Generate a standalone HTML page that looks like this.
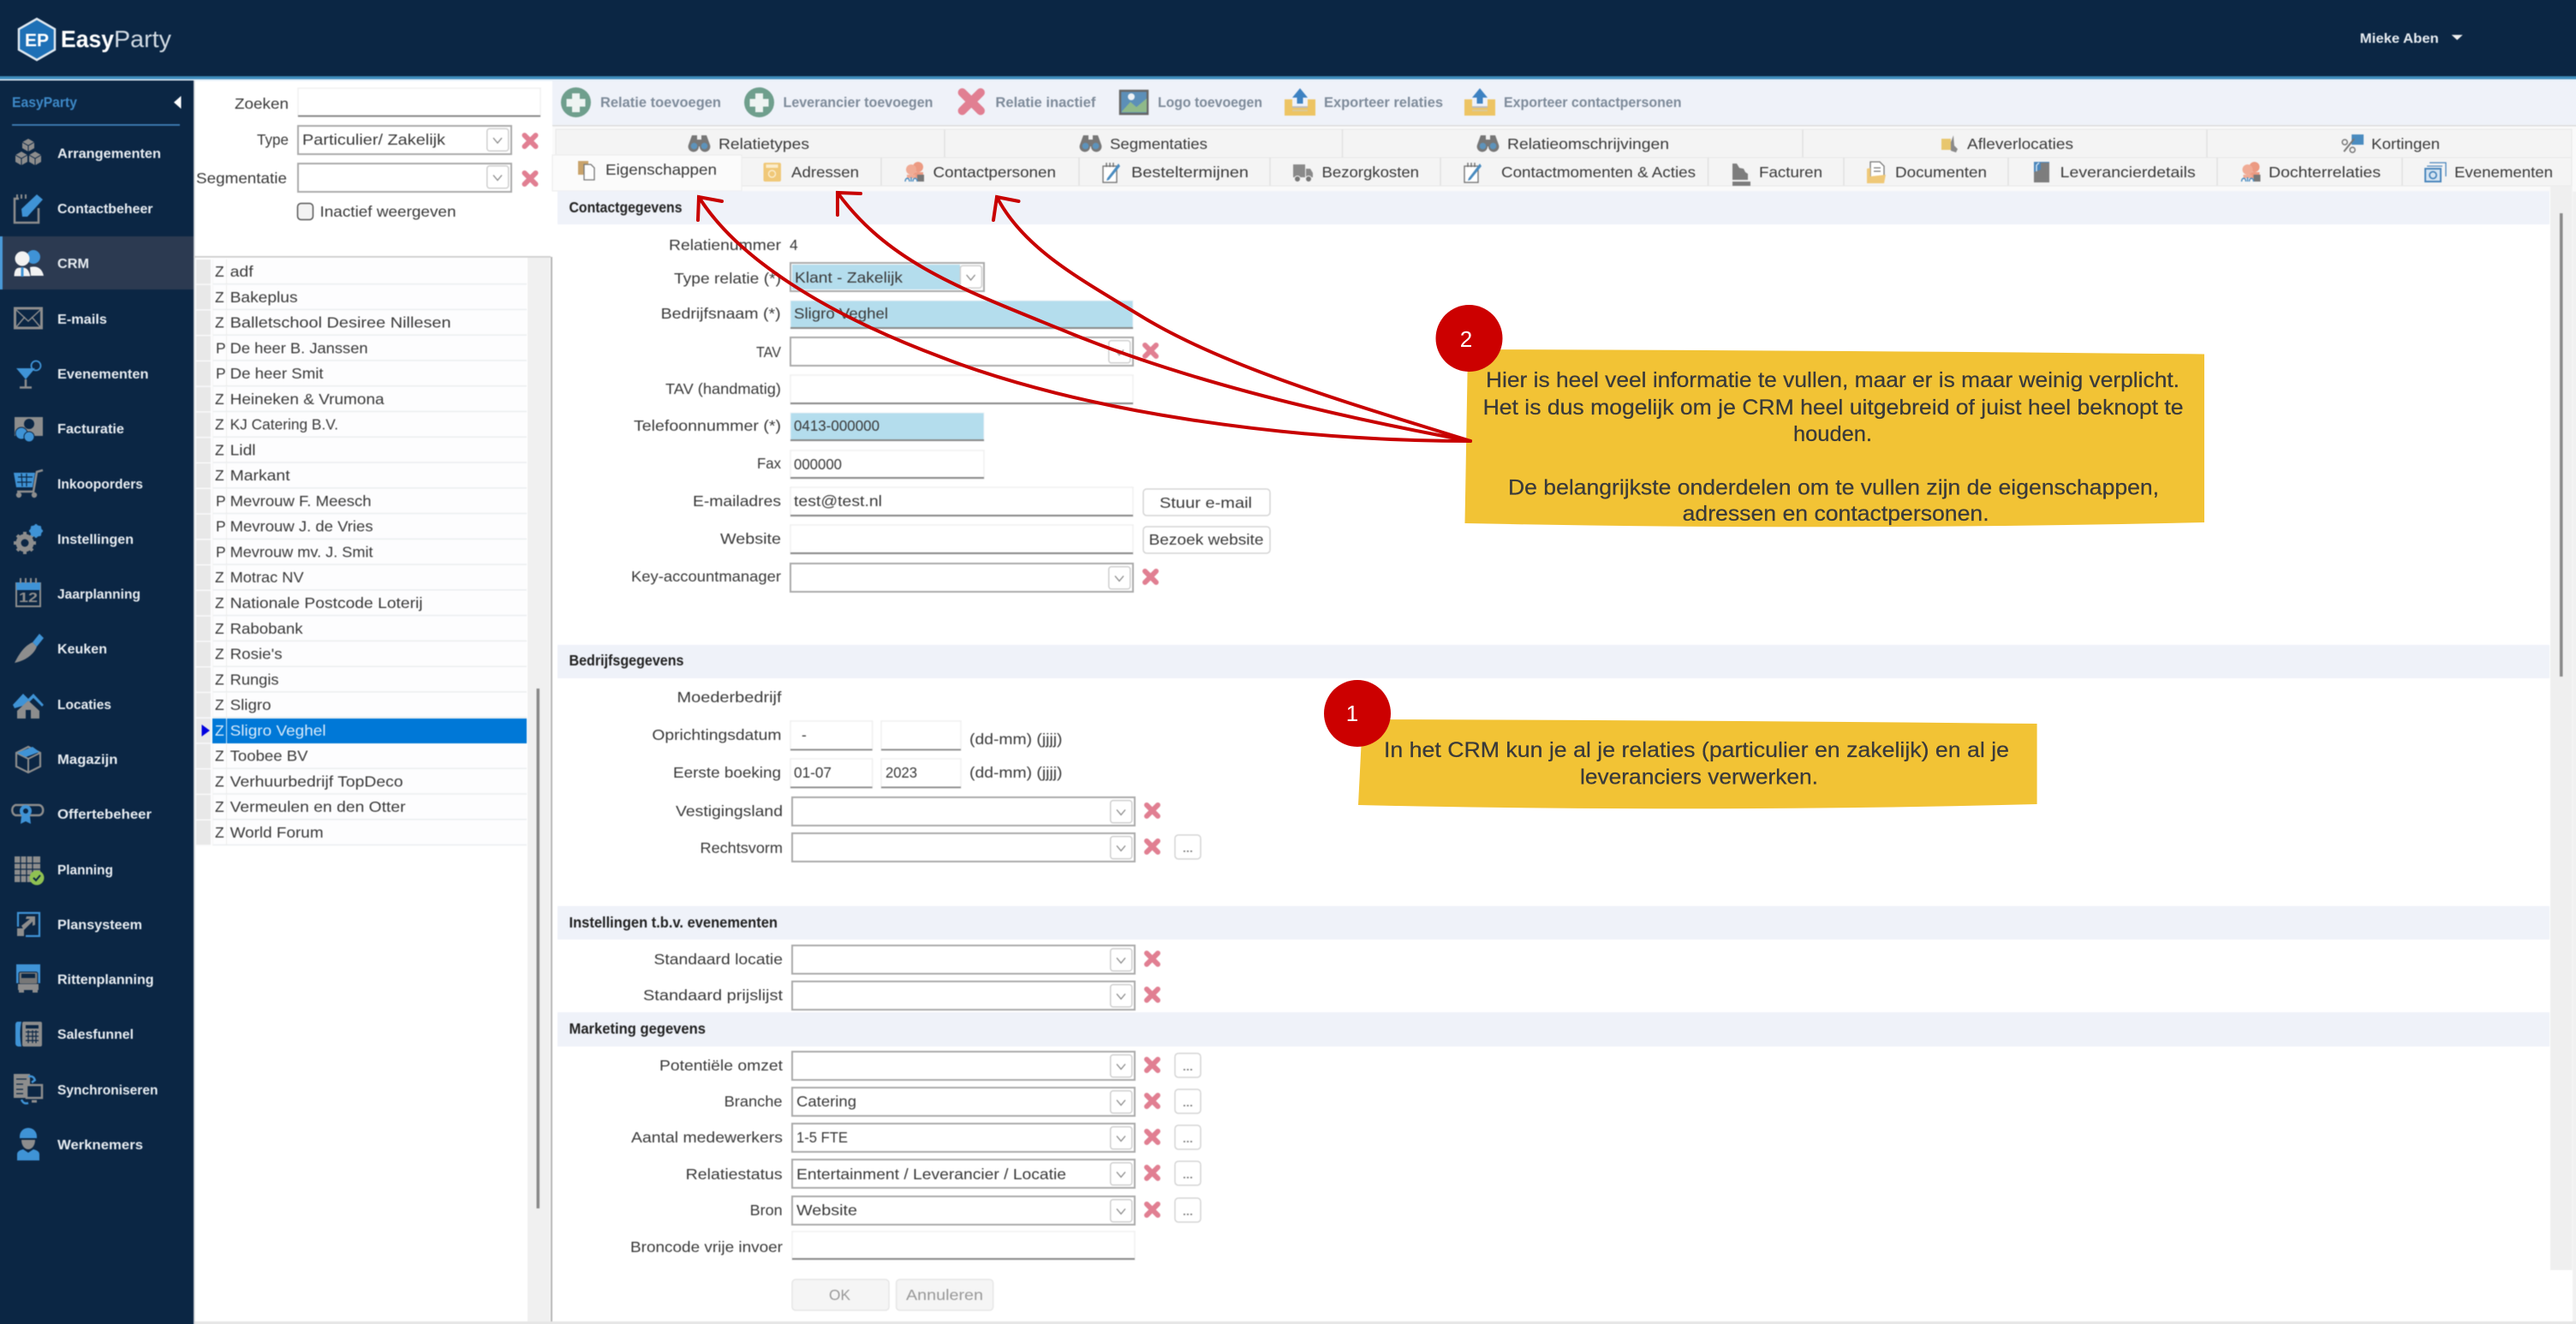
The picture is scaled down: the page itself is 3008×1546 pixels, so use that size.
<!DOCTYPE html>
<html lang="nl"><head><meta charset="utf-8"><title>EasyParty CRM</title>
<style>
html,body{margin:0;padding:0;background:#fff;width:3008px;height:1546px;overflow:hidden}
svg{display:block}
text{font-family:"Liberation Sans",sans-serif;white-space:pre}
.t{font-size:17.5px;fill:#3a3a3a}
.h{font-size:17.5px;font-weight:bold;fill:#222}
.s{font-size:16px;font-weight:bold;fill:#e6ebf0}
.b{font-size:16.5px;font-weight:bold;fill:#7f8c9b}
.n{font-size:25px;fill:#3a3a3a;stroke:#3a3a3a;stroke-width:.25px}
.ui{filter:blur(.45px)}
.sel{fill:#fff;stroke:#aaa;stroke-width:2}
.inp{fill:#fff;stroke:#f0f0f0;stroke-width:1.5}
.ul{fill:#8a8a8a}
.btn{fill:#fff;stroke:#d5d5d5;stroke-width:1.5}
.g{fill:#8d8d8d}.bl{fill:#3f93d6}
.gs{stroke:#8d8d8d;fill:none}.bs{stroke:#3f93d6;fill:none}
.arr{fill:none;stroke:#c80000;stroke-width:4;stroke-linecap:round;stroke-linejoin:miter}
</style></head><body>
<svg xmlns="http://www.w3.org/2000/svg" width="3008" height="1546" viewBox="0 0 3008 1546">
<defs>
<g id="x"><path d="M3 3L16 16M16 3L3 16" stroke="#e17f92" stroke-width="6" stroke-linecap="round" fill="none"/></g>
<g id="dd"><rect x=".75" y=".75" width="25" height="26" rx="3" fill="#fff" stroke="#cfcfcf" stroke-width="1.5"/><path d="M8 11.5l5 6 5-6" fill="none" stroke="#888" stroke-width="1.3"/></g>
<g id="s400"><rect class="sel" x="1" y="1" width="400" height="33"/><use href="#dd" x="372" y="4"/><use href="#x" x="412" y="7"/></g>
<g id="dots"><rect class="btn" x="1" y="1" width="30" height="28" rx="4"/><path d="M11 20h2M15 20h2M19 20h2" stroke="#666" stroke-width="1.4"/></g>
<g id="bino"><path d="M4 0h6v5h5V0h6l4 11a6.200 6.200 0 1 1-12 2h-1a6.200 6.200 0 1 1-12-2z" fill="#777"/><circle cx="6.500" cy="12.500" r="3.800" fill="#5d93bb"/><circle cx="18.500" cy="12.500" r="3.800" fill="#5d93bb"/></g>
<g id="plus"><circle cx="17.500" cy="17.500" r="17.500" fill="#6f9f8d"/><path d="M13 7h9v6.500h6.500v9H22v6.500h-9v-6.500H6.500v-9H13z" fill="#eef4f2"/></g>
<g id="exp"><path d="M0 13h9v8h18v-8h9v19H0z" fill="#edc463"/><rect x="9" y="21" width="18" height="2" fill="#bdbdbd"/><rect x="9" y="25" width="18" height="2" fill="#d9c99a"/><path d="M18 0l9 11h-5.500v7h-7v-7H9z" fill="#3d82c2"/></g>
<pattern id="rows" patternUnits="userSpaceOnUse" x="229" y="303" width="386" height="29.770">
<rect width="386" height="29.770" fill="#fdfdfe"/><rect width="17" height="28.500" fill="#e8e8e8"/><rect x="19" y="28" width="367" height="1.300" fill="#e9ecee"/><rect x="19" width="1" height="29" fill="#f4f4f4"/><rect x="35" width="1" height="29" fill="#ececec"/>
</pattern>
</defs>

<g class="ui">
<rect x="-30" y="-30" width="3068" height="1606" fill="#fff"/>
<rect x="3004" y="94" width="34" height="1482" fill="#f1f1f1"/>
<rect y="1543" width="2812" height="33" x="226" fill="#e6e6e6"/>

<!-- header -->
<rect x="-30" y="-30" width="3068" height="119" fill="#0b2644"/>
<rect x="-30" y="89" width="3068" height="3.500" fill="#3f8dbd"/>
<rect x="-30" y="92.500" width="3068" height="2" fill="#e4f0fa"/>
<path d="M43 22L64 34V58L43 70 22 58V34z" fill="#1e70b6" stroke="#dfe8f0" stroke-width="2.500"/>
<text x="29" y="54" font-size="21" font-weight="bold" fill="#fff" textLength="28" lengthAdjust="spacingAndGlyphs">EP</text>
<text x="71" y="55" font-size="28" font-weight="bold" fill="#fff" textLength="62" lengthAdjust="spacingAndGlyphs">Easy</text>
<text x="133" y="55" font-size="28" fill="#cfd8e1" textLength="67" lengthAdjust="spacingAndGlyphs">Party</text>
<text class="s" x="2755.700" y="50" textLength="92" lengthAdjust="spacingAndGlyphs">Mieke Aben</text>
<path d="M2862.700 40.700h13l-6.500 6z" fill="#f0f0f0"/>

<!-- sidebar -->
<rect x="-30" y="94" width="256" height="1482" fill="#0b2644"/>
<rect x="226" y="94" width="1.500" height="1482" fill="#c8ccd2"/>
<text x="14" y="125" font-size="17" font-weight="bold" fill="#3d88c6" textLength="76" lengthAdjust="spacingAndGlyphs">EasyParty</text>
<path d="M211.500 112v15l-8.500-7.500z" fill="#fff"/>
<rect x="14" y="145" width="196" height="1.800" fill="#3f80b8"/>
<rect x="-30" y="276" width="256" height="62" fill="#2c3a51"/>
<rect x="-30" y="276" width="33" height="62" fill="#4a9ad8"/>

<text class="s" x="67" y="184.500" textLength="121" lengthAdjust="spacingAndGlyphs">Arrangementen</text>
<text class="s" x="67" y="249" textLength="111.500" lengthAdjust="spacingAndGlyphs">Contactbeheer</text>
<text class="s" x="67" y="313" textLength="37" lengthAdjust="spacingAndGlyphs">CRM</text>
<text class="s" x="67" y="378" textLength="58" lengthAdjust="spacingAndGlyphs">E-mails</text>
<text class="s" x="67" y="442" textLength="106.500" lengthAdjust="spacingAndGlyphs">Evenementen</text>
<text class="s" x="67" y="506" textLength="78" lengthAdjust="spacingAndGlyphs">Facturatie</text>
<text class="s" x="67" y="570.500" textLength="100" lengthAdjust="spacingAndGlyphs">Inkooporders</text>
<text class="s" x="67" y="635" textLength="89" lengthAdjust="spacingAndGlyphs">Instellingen</text>
<text class="s" x="67" y="699" textLength="97" lengthAdjust="spacingAndGlyphs">Jaarplanning</text>
<text class="s" x="67" y="763" textLength="58" lengthAdjust="spacingAndGlyphs">Keuken</text>
<text class="s" x="67" y="828" textLength="63" lengthAdjust="spacingAndGlyphs">Locaties</text>
<text class="s" x="67" y="892" textLength="70.500" lengthAdjust="spacingAndGlyphs">Magazijn</text>
<text class="s" x="67" y="956" textLength="110" lengthAdjust="spacingAndGlyphs">Offertebeheer</text>
<text class="s" x="67" y="1021" textLength="65" lengthAdjust="spacingAndGlyphs">Planning</text>
<text class="s" x="67" y="1085" textLength="99" lengthAdjust="spacingAndGlyphs">Plansysteem</text>
<text class="s" x="67" y="1149" textLength="112.600" lengthAdjust="spacingAndGlyphs">Rittenplanning</text>
<text class="s" x="67" y="1213" textLength="89" lengthAdjust="spacingAndGlyphs">Salesfunnel</text>
<text class="s" x="67" y="1278" textLength="117.500" lengthAdjust="spacingAndGlyphs">Synchroniseren</text>
<text class="s" x="67" y="1342" textLength="100" lengthAdjust="spacingAndGlyphs">Werknemers</text>

<!-- sidebar icons -->
<g transform="translate(33,179)">
<path d="M0-17l7 4v7l-7 4-7-4v-7zM-8-2l7 4v8l-7 4-7-4v-8zM8-2l7 4v8l-7 4-7-4v-8z" class="g"/><path d="M-7-13l7 4 7-4M0-9v7M-15 2l7 4 7-4M-8 6v8M1 2l7 4 7-4M8 6v8" stroke="#0b2644" stroke-width="1" fill="none"/>
</g>
<g transform="translate(33,243)"><path d="M-11-11h-5v28h28V0" class="gs" stroke-width="2.500"/><path d="M-13-16v5M-8-16v5M-3-16v5" class="gs" stroke-width="2"/><path d="M-7 10l-1-9L10-16l7 6L-1 10z" class="bl"/></g>
<g transform="translate(33,307)"><circle cx="6" cy="-7" r="8" class="bl"/><circle cx="-7" cy="-5" r="8.500" fill="#f2f2f2"/><path d="M-17 16c0-12 6-11 10-11s8 1 10 11z" fill="#f2f2f2" stroke="#2c3a51"/><path d="M2 5c8-2 14 1 16 10H3z" fill="#f2f2f2"/><rect x="-8.500" y="5" width="3" height="11" class="bl"/></g>
<g transform="translate(33,372)"><rect x="-15.500" y="-12" width="31" height="23" class="gs" stroke-width="3"/><path d="M-15-11L0 3 15-11M-15 11L-4-2M15 11L4-2" class="gs" stroke-width="1.500"/></g>
<g transform="translate(33,437)"><path d="M-14-7H8L-3 6z" class="bl"/><path d="M-3 6v9M-10 15.500H4" class="gs" stroke-width="2.500"/><circle cx="9" cy="-10" r="5.500" class="bs" stroke-width="1.800"/></g>
<g transform="translate(33,500)"><rect x="-16" y="-13" width="33" height="22" class="g"/><circle cx="1" cy="-5" r="6" fill="#0b2644"/><circle cx="-8" cy="6" r="7" class="bl" stroke="#0b2644"/><circle cx="1" cy="10" r="6" class="bl" stroke="#0b2644"/></g>
<g transform="translate(33,565)"><path d="M-17-13H8l-3 17H-14z" class="bl"/><path d="M-12-8H5M-13-2H4M-8-12l1 15M-2-12v15" stroke="#0b2644" stroke-width="1.200" fill="none"/><path d="M17-16L10-14 6 9H-13" class="gs" stroke-width="2.500"/><circle cx="-11" cy="13" r="3.200" class="g"/><circle cx="7" cy="13" r="3.200" class="g"/></g>
<g transform="translate(33,629)"><circle cx="-4" cy="5" r="7.500" fill="none" stroke="#8d8d8d" stroke-width="6"/><path d="M-4-8v26M-17 5H9M-13-4L5 14M5-4L-13 14" stroke="#8d8d8d" stroke-width="4"/><circle cx="-4" cy="5" r="4.500" fill="#0b2644"/><circle cx="9" cy="-9" r="5" fill="none" stroke="#3f93d6" stroke-width="4"/><path d="M9-17V-1M1-9h16M3.500-14.500l11 11M14.500-14.500l-11 11" stroke="#3f93d6" stroke-width="2.500"/></g>
<g transform="translate(33,692)"><rect x="-14" y="-11" width="28" height="27" class="gs" stroke-width="2"/><rect x="-14" y="-12" width="28" height="9" class="bl"/><path d="M-9-17v6M-3-17v6M3-17v6M9-17v6" class="gs" stroke-width="2"/><text x="-11" y="11" font-size="16" font-weight="bold" fill="#8d8d8d" textLength="22" lengthAdjust="spacingAndGlyphs">12</text></g>
<g transform="translate(33,758)"><path d="M-16 16C-10 4-4-4 5-8l5 5C6 8-6 14-16 16z" class="g"/><path d="M5-8l8-10 5 5-8 10z" class="bl"/></g>
<g transform="translate(33,823)"><path d="M-18 0L-6-13 0-7 6-13 18 0l-2 2L6-8-4 2l-2-1-10 3z" class="bl"/><path d="M0-5L13 7v9H-13V7z" class="g"/><rect x="-3" y="6" width="6" height="10" fill="#0b2644"/></g>
<g transform="translate(33,887)"><path d="M0-15l14 7v16L0 15-14 8V-8z" class="gs" stroke-width="2.200"/><path d="M-14-8L0-1 14-8M0-1v16" class="gs" stroke-width="2"/><path d="M-13-8L5-15l8 6L-3-3z" class="bl"/></g>
<g transform="translate(33,950)"><path d="M-15-10H12c7 0 7 12 0 12H-15c-5-2-5-10 0-12z" class="gs" stroke-width="2.500"/><circle cx="-3" cy="-3" r="7" class="bl"/><circle cx="-3" cy="-3" r="3" fill="#0b2644"/><path d="M-8 3l-1 9 6-3 6 3-1-9z" class="bl"/></g>
<g transform="translate(33,1016)"><rect x="-16" y="-16" width="30" height="30" class="g"/><path d="M-16-8h30M-16-1h30M-16 6h30M-9-16v30M-2-16v30M5-16v30" stroke="#0b2644" stroke-width="1.200"/><circle cx="10" cy="9" r="8.500" fill="#8fc152"/><path d="M6 9l3 3 5-6" fill="none" stroke="#0b2644" stroke-width="2"/></g>
<g transform="translate(33,1079)"><path d="M-12 3V-13H13V14H-3" class="bs" stroke-width="2.200"/><rect x="-13" y="5" width="8" height="9" class="g"/><path d="M-8 2L2-6h-5l1-3H8V1L5 2V-3L-5 7z" class="g"/></g>
<g transform="translate(33,1143)"><rect x="-14" y="-17" width="28" height="22" class="bl"/><rect x="-11" y="-8" width="22" height="14" rx="2" fill="#777" stroke="#0b2644"/><rect x="-8" y="-6" width="16" height="5" fill="#0b2644"/><rect x="-12" y="6" width="24" height="7" class="g"/><rect x="-11" y="13" width="6" height="3" class="g"/><rect x="5" y="13" width="6" height="3" class="g"/></g>
<g transform="translate(33,1207)"><path d="M-12-14c-3 0-3 3-3 5v20c0 3 2 4 4 4h3c-2-10-2-20 0-29z" class="bl"/><rect x="-7" y="-14" width="23" height="29" rx="2" class="g"/><rect x="-3" y="-10" width="15" height="4" fill="#0b2644"/><path d="M-3-2h15M-3 3h15M-3 8h15M0-4v15M5-4v15M9-4v15" stroke="#0b2644" stroke-width="1.200"/></g>
<g transform="translate(33,1272)"><rect x="-17" y="-18" width="19" height="28" class="g"/><path d="M-14-12H-2M-14-6H-6M-14 0H-6M-14 5H-6" stroke="#0b2644" stroke-width="1.300"/><path d="M0-15c5-1 7 1 8 5M4-8l4-3M-8 12c2 4 4 5 8 4" class="bs" stroke-width="2.500"/><rect x="-2" y="-5" width="18" height="15" fill="#0b2644" stroke="#8d8d8d" stroke-width="2.500"/><path d="M4 14h6" class="gs" stroke-width="3"/></g>
<g transform="translate(33,1336)"><path d="M-10-9a10 10 0 0 1 20 0v2h-20z" class="bl"/><path d="M-8-5H8C8 2 4 6 0 6S-8 2-8-5z" class="g"/><path d="M-13 19V12c0-4 4-5 7-6l6 4 6-4c3 1 7 2 7 6v7z" class="bl"/></g>

<!-- list panel -->
<rect x="226" y="299" width="417" height="1.800" fill="#cdcdcd"/>
<rect x="616" y="301" width="26" height="1242" fill="#f0f0f0"/>
<rect x="626.500" y="804" width="3.500" height="607" fill="#8a8a8a"/>
<rect x="643" y="300" width="2" height="1243" fill="#b4b4b4"/>
<rect x="229" y="303" width="386" height="684.700" fill="url(#rows)"/>

<text class="t" x="274" y="127" textLength="63" lengthAdjust="spacingAndGlyphs">Zoeken</text>
<rect class="inp" x="348" y="103" width="283" height="33"/><rect class="ul" x="348" y="134.500" width="283" height="2"/>
<text class="t" x="300" y="169" textLength="37" lengthAdjust="spacingAndGlyphs">Type</text>
<rect class="sel" x="348" y="147" width="249" height="33"/><use href="#dd" x="568" y="149.500"/><use href="#x" x="609.500" y="155"/>
<text class="t" x="353" y="169" textLength="167" lengthAdjust="spacingAndGlyphs">Particulier/ Zakelijk</text>
<text class="t" x="229" y="214" textLength="106" lengthAdjust="spacingAndGlyphs">Segmentatie</text>
<rect class="sel" x="348" y="191" width="249" height="33"/><use href="#dd" x="568" y="193"/><use href="#x" x="609.500" y="199"/>
<rect x="347.500" y="237.500" width="18" height="19" rx="4" fill="#f3f3f3" stroke="#555" stroke-width="1.500"/>
<text class="t" x="373.500" y="253" textLength="159" lengthAdjust="spacingAndGlyphs">Inactief weergeven</text>

<rect x="248" y="839" width="367" height="29" fill="#0078d7"/><rect x="264" y="839" width="1" height="29" fill="#cfe6f8"/>
<path d="M235.500 846l9.500 7-9.500 7z" fill="#0000e0"/>

<g class="t">
<text x="251" y="323" textLength="9">Z</text><text x="268.600" y="323" textLength="27" lengthAdjust="spacingAndGlyphs">adf</text>
<text x="251" y="352.800" textLength="9">Z</text><text x="268.600" y="352.800" textLength="79" lengthAdjust="spacingAndGlyphs">Bakeplus</text>
<text x="251" y="382.500" textLength="9">Z</text><text x="268.600" y="382.500" textLength="258" lengthAdjust="spacingAndGlyphs">Balletschool Desiree Nillesen</text>
<text x="252" y="412.300" textLength="8">P</text><text x="268.600" y="412.300" textLength="161" lengthAdjust="spacingAndGlyphs">De heer B. Janssen</text>
<text x="252" y="442.100" textLength="8">P</text><text x="268.600" y="442.100" textLength="109" lengthAdjust="spacingAndGlyphs">De heer Smit</text>
<text x="251" y="471.900" textLength="9">Z</text><text x="268.600" y="471.900" textLength="180" lengthAdjust="spacingAndGlyphs">Heineken &amp; Vrumona</text>
<text x="251" y="501.600" textLength="9">Z</text><text x="268.600" y="501.600" textLength="126.500" lengthAdjust="spacingAndGlyphs">KJ Catering B.V.</text>
<text x="251" y="531.400" textLength="9">Z</text><text x="268.600" y="531.400" textLength="30" lengthAdjust="spacingAndGlyphs">Lidl</text>
<text x="251" y="561.200" textLength="9">Z</text><text x="268.600" y="561.200" textLength="70" lengthAdjust="spacingAndGlyphs">Markant</text>
<text x="252" y="590.900" textLength="8">P</text><text x="268.600" y="590.900" textLength="165" lengthAdjust="spacingAndGlyphs">Mevrouw F. Meesch</text>
<text x="252" y="620.700" textLength="8">P</text><text x="268.600" y="620.700" textLength="167" lengthAdjust="spacingAndGlyphs">Mevrouw J. de Vries</text>
<text x="252" y="650.500" textLength="8">P</text><text x="268.600" y="650.500" textLength="167" lengthAdjust="spacingAndGlyphs">Mevrouw mv. J. Smit</text>
<text x="251" y="680.200" textLength="9">Z</text><text x="268.600" y="680.200" textLength="86" lengthAdjust="spacingAndGlyphs">Motrac NV</text>
<text x="251" y="710" textLength="9">Z</text><text x="268.600" y="710" textLength="225" lengthAdjust="spacingAndGlyphs">Nationale Postcode Loterij</text>
<text x="251" y="739.800" textLength="9">Z</text><text x="268.600" y="739.800" textLength="85" lengthAdjust="spacingAndGlyphs">Rabobank</text>
<text x="251" y="769.600" textLength="9">Z</text><text x="268.600" y="769.600" textLength="61" lengthAdjust="spacingAndGlyphs">Rosie's</text>
<text x="251" y="799.300" textLength="9">Z</text><text x="268.600" y="799.300" textLength="57" lengthAdjust="spacingAndGlyphs">Rungis</text>
<text x="251" y="829.100" textLength="9">Z</text><text x="268.600" y="829.100" textLength="48" lengthAdjust="spacingAndGlyphs">Sligro</text>
<text x="251" y="858.900" textLength="9" style="fill:#d6e9fa">Z</text><text x="268.600" y="858.900" textLength="112" lengthAdjust="spacingAndGlyphs" style="fill:#d6e9fa">Sligro Veghel</text>
<text x="251" y="888.600" textLength="9">Z</text><text x="268.600" y="888.600" textLength="91" lengthAdjust="spacingAndGlyphs">Toobee BV</text>
<text x="251" y="918.400" textLength="9">Z</text><text x="268.600" y="918.400" textLength="202" lengthAdjust="spacingAndGlyphs">Verhuurbedrijf TopDeco</text>
<text x="251" y="948.200" textLength="9">Z</text><text x="268.600" y="948.200" textLength="205" lengthAdjust="spacingAndGlyphs">Vermeulen en den Otter</text>
<text x="251" y="977.900" textLength="9">Z</text><text x="268.600" y="977.900" textLength="109" lengthAdjust="spacingAndGlyphs">World Forum</text>
</g>

<!-- toolbar -->
<rect x="645" y="94" width="2393" height="52" fill="#eff2f9"/>
<rect x="645" y="146" width="2393" height="1.500" fill="#dcdcdc"/>
<rect x="645" y="147.500" width="2393" height="76" fill="#fafafa"/>
<use href="#plus" x="655" y="102"/><text class="b" x="701" y="125" textLength="141" lengthAdjust="spacingAndGlyphs">Relatie toevoegen</text>
<use href="#plus" x="869" y="102"/><text class="b" x="914.500" y="125" textLength="175" lengthAdjust="spacingAndGlyphs">Leverancier toevoegen</text>
<use href="#x" transform="translate(1118.600,103) scale(1.650)"/><text class="b" x="1162.400" y="125" textLength="117" lengthAdjust="spacingAndGlyphs">Relatie inactief</text>
<rect x="1308" y="106" width="32" height="27" fill="#5c8fb8" stroke="#666" stroke-width="2.500"/><path d="M1310 130l10-11 7 6 12-10v16h-29z" fill="#8fb98a"/><circle cx="1321" cy="113" r="4" fill="#eef2f6"/>
<text class="b" x="1352" y="125" textLength="122" lengthAdjust="spacingAndGlyphs">Logo toevoegen</text>
<use href="#exp" x="1500" y="103"/><text class="b" x="1546" y="125" textLength="139" lengthAdjust="spacingAndGlyphs">Exporteer relaties</text>
<use href="#exp" x="1710" y="103"/><text class="b" x="1756" y="125" textLength="207.500" lengthAdjust="spacingAndGlyphs">Exporteer contactpersonen</text>

<!-- tabs row 1 -->
<rect x="649" y="151" width="2354" height="33" fill="#f4f4f4" stroke="#e7e7e7"/>
<path d="M1103 151v33M1567.500 151v33M2105 151v33M2577 151v33" stroke="#e2e2e2" stroke-width="1.500"/>
<use href="#bino" x="804" y="158"/><text class="t" x="839" y="174" textLength="106" lengthAdjust="spacingAndGlyphs">Relatietypes</text>
<use href="#bino" x="1261" y="158"/><text class="t" x="1296" y="174" textLength="114" lengthAdjust="spacingAndGlyphs">Segmentaties</text>
<use href="#bino" x="1725" y="158"/><text class="t" x="1760" y="174" textLength="189" lengthAdjust="spacingAndGlyphs">Relatieomschrijvingen</text>
<g transform="translate(2267,158)"><rect x="0" y="4" width="11" height="13" fill="#e8c66d"/><path d="M14 0l1 12 4 4-2 4-6-2V8z" fill="#8a8a8a"/></g>
<text class="t" x="2297" y="174" textLength="124" lengthAdjust="spacingAndGlyphs">Afleverlocaties</text>
<g transform="translate(2735,157)"><rect x="11" y="0" width="14" height="12" fill="#4a8cc0"/><path d="M2 20L14 5" stroke="#777" stroke-width="2"/><circle cx="3" cy="9" r="3" fill="none" stroke="#777" stroke-width="1.500"/><circle cx="12" cy="18" r="3" fill="none" stroke="#777" stroke-width="1.500"/></g>
<text class="t" x="2769" y="174" textLength="80" lengthAdjust="spacingAndGlyphs">Kortingen</text>

<!-- tabs row 2 -->
<rect x="866" y="184" width="2137" height="33" fill="#f4f4f4" stroke="#e7e7e7"/>
<path d="M1029 184v33M1260 184v33M1483 184v33M1682 184v33M1994.600 184v33M2153 184v33M2345 184v33M2589 184v33M2805 184v33" stroke="#e2e2e2" stroke-width="1.500"/>
<rect x="645" y="181" width="221" height="42" fill="#fbfbfb" stroke="#ececec"/>
<g transform="translate(675,186)"><rect x="0" y="2" width="12" height="16" fill="#c9a36b"/><path d="M7 6h8l4 4v14H7z" fill="#fdfdfd" stroke="#777" stroke-width="1.300"/></g>
<text class="t" x="707" y="204" textLength="130" lengthAdjust="spacingAndGlyphs">Eigenschappen</text>
<g transform="translate(891.500,190)"><rect width="20.500" height="22" rx="2" fill="#f0c878"/><rect x="3" y="2" width="14" height="4" fill="#fbeccb"/><circle cx="10" cy="13" r="4" fill="none" stroke="#fbeccb" stroke-width="1.500"/></g>
<text class="t" x="924" y="207" textLength="79" lengthAdjust="spacingAndGlyphs">Adressen</text>
<g transform="translate(1056,189)"><circle cx="16" cy="6" r="6" fill="#ec9a82"/><path d="M10 12h12v7H10z" fill="#ec9a82"/><circle cx="8" cy="9" r="6" fill="#f0ab95"/><path d="M3 15h10v4H3z" fill="#f0ab95"/><rect x="15" y="15" width="8" height="8" fill="#777"/><path d="M1 23c0-5 5-5 5 0M8 18v5M10 23c0-5 5-5 5 0" fill="none" stroke="#4a8cc0" stroke-width="1.500"/></g>
<text class="t" x="1089.500" y="207" textLength="143.500" lengthAdjust="spacingAndGlyphs">Contactpersonen</text>
<g transform="translate(1287,189)"><rect x="1" y="5" width="16" height="19" fill="#fff" stroke="#777" stroke-width="1.400"/><path d="M5 1v5M9 1v5M13 1v5" stroke="#666" stroke-width="1.300"/><path d="M6 19l-1 3 3-1L21 5l-2-3z" fill="#4a8cc0"/></g>
<text class="t" x="1321" y="207" textLength="137" lengthAdjust="spacingAndGlyphs">Besteltermijnen</text>
<g transform="translate(1510,192)"><rect x="0" y="0" width="14" height="15" fill="#8a8a8a"/><path d="M15 5h5l3 5v5h-8z" fill="#8a8a8a"/><circle cx="5" cy="17" r="3.500" fill="#777" stroke="#f4f4f4"/><circle cx="18" cy="17" r="3.500" fill="#777" stroke="#f4f4f4"/></g>
<text class="t" x="1543.500" y="207" textLength="113.500" lengthAdjust="spacingAndGlyphs">Bezorgkosten</text>
<g transform="translate(1709,189)"><rect x="1" y="5" width="16" height="19" fill="#fff" stroke="#777" stroke-width="1.400"/><path d="M5 1v5M9 1v5M13 1v5" stroke="#666" stroke-width="1.300"/><path d="M6 19l-1 3 3-1L21 5l-2-3z" fill="#4a8cc0"/></g>
<text class="t" x="1753" y="207" textLength="227" lengthAdjust="spacingAndGlyphs">Contactmomenten &amp; Acties</text>
<path d="M2023 191h5l3 5 5 1 2 4 3 2v7h-18zM2023 212h21v5h-21z" fill="#7d7d7d"/>
<text class="t" x="2054" y="207" textLength="74" lengthAdjust="spacingAndGlyphs">Facturen</text>
<g transform="translate(2180,189)"><path d="M4 0h11l5 5v13H4z" fill="#fff" stroke="#777" stroke-width="1.300"/><path d="M8 7h8M8 11h8" stroke="#777" stroke-width="1.200"/><path d="M0 8l4-1v10l18-2-2 10-20 0z" fill="#efc877"/></g>
<text class="t" x="2213" y="207" textLength="107" lengthAdjust="spacingAndGlyphs">Documenten</text>
<g transform="translate(2375,189)"><rect x="0" y="0" width="18" height="12" fill="#4a86bc"/><path d="M0 12l8-3V1h10v23H0z" fill="#7d7d7d"/><path d="M3 11V4l3-3" stroke="#cde0ef" stroke-width="1.500" fill="none"/></g>
<text class="t" x="2405.700" y="207" textLength="158" lengthAdjust="spacingAndGlyphs">Leverancierdetails</text>
<g transform="translate(2616.500,189)"><circle cx="16" cy="6" r="6" fill="#ec9a82"/><path d="M10 12h12v7H10z" fill="#ec9a82"/><circle cx="8" cy="9" r="6" fill="#f0ab95"/><path d="M3 15h10v4H3z" fill="#f0ab95"/><rect x="15" y="15" width="8" height="8" fill="#777"/><path d="M1 23c0-5 5-5 5 0M8 18v5M10 23c0-5 5-5 5 0" fill="none" stroke="#4a8cc0" stroke-width="1.500"/></g>
<text class="t" x="2649" y="207" textLength="131" lengthAdjust="spacingAndGlyphs">Dochterrelaties</text>
<g transform="translate(2831,190)"><path d="M6 0h19v16M3 4h18" fill="none" stroke="#4a86bc" stroke-width="1.300"/><rect x="1" y="7" width="18" height="15" fill="#d4e4f2" stroke="#4a86bc" stroke-width="2"/><circle cx="10" cy="14.500" r="4" fill="none" stroke="#4a86bc" stroke-width="1.800"/></g>
<text class="t" x="2866" y="207" textLength="115" lengthAdjust="spacingAndGlyphs">Evenementen</text>

<!-- content -->
<rect x="2978" y="217" width="25.500" height="1266" fill="#efefef"/>
<rect x="2989" y="249" width="3.500" height="541" fill="#8a8a8a"/>
<rect x="651" y="223" width="2326" height="39" fill="#eff2f9"/>
<rect x="651" y="753" width="2326" height="39" fill="#eff2f9"/>
<rect x="651" y="1058" width="2326" height="39" fill="#eff2f9"/>
<rect x="651" y="1182" width="2326" height="40" fill="#eff2f9"/>
<text class="h" x="664.500" y="248" textLength="132" lengthAdjust="spacingAndGlyphs">Contactgegevens</text>
<text class="h" x="664.500" y="777" textLength="134" lengthAdjust="spacingAndGlyphs">Bedrijfsgegevens</text>
<text class="h" x="664.500" y="1083" textLength="243.500" lengthAdjust="spacingAndGlyphs">Instellingen t.b.v. evenementen</text>
<text class="h" x="664.500" y="1207" textLength="159.500" lengthAdjust="spacingAndGlyphs">Marketing gegevens</text>

<text class="t" x="781" y="292" textLength="131" lengthAdjust="spacingAndGlyphs">Relatienummer</text>
<text class="t" x="922" y="292" textLength="9">4</text>
<text class="t" x="787" y="331" textLength="125" lengthAdjust="spacingAndGlyphs">Type relatie (*)</text>
<rect class="sel" x="923" y="307" width="226" height="33"/><rect x="925" y="309" width="196" height="29" fill="#b4dded"/><use href="#dd" x="1120.600" y="309.500"/>
<text class="t" x="928" y="330" textLength="126" lengthAdjust="spacingAndGlyphs">Klant - Zakelijk</text>
<text class="t" x="771.600" y="372" textLength="140" lengthAdjust="spacingAndGlyphs">Bedrijfsnaam (*)</text>
<rect x="923" y="351" width="400" height="33" fill="#b4dded" stroke="#eef3f6"/><rect class="ul" x="923" y="382" width="400" height="2"/>
<text class="t" x="927" y="372" textLength="110" lengthAdjust="spacingAndGlyphs">Sligro Veghel</text>
<text class="t" x="883" y="417" textLength="29" lengthAdjust="spacingAndGlyphs">TAV</text>
<use href="#s400" x="922" y="393"/>
<text class="t" x="777" y="460" textLength="135" lengthAdjust="spacingAndGlyphs">TAV (handmatig)</text>
<rect class="inp" x="923" y="438" width="400" height="34"/><rect class="ul" x="923" y="470" width="400" height="2"/>
<text class="t" x="740" y="503" textLength="172" lengthAdjust="spacingAndGlyphs">Telefoonnummer (*)</text>
<rect x="923" y="482" width="226" height="33" fill="#b4dded" stroke="#eef3f6"/><rect class="ul" x="923" y="513" width="226" height="2"/>
<text class="t" x="927" y="503" textLength="100" lengthAdjust="spacingAndGlyphs">0413-000000</text>
<text class="t" x="884" y="547" textLength="28" lengthAdjust="spacingAndGlyphs">Fax</text>
<rect class="inp" x="923" y="526" width="226" height="33"/><rect class="ul" x="923" y="557" width="226" height="2"/>
<text class="t" x="927" y="548" textLength="56" lengthAdjust="spacingAndGlyphs">000000</text>
<text class="t" x="809" y="591" textLength="103" lengthAdjust="spacingAndGlyphs">E-mailadres</text>
<rect class="inp" x="923" y="569" width="400" height="34"/><rect class="ul" x="923" y="601" width="400" height="2"/>
<text class="t" x="927" y="591" textLength="103" lengthAdjust="spacingAndGlyphs">test@test.nl</text>
<rect class="btn" x="1335" y="571" width="148" height="31" rx="4"/>
<text class="t" x="1354" y="593" textLength="108" lengthAdjust="spacingAndGlyphs">Stuur e-mail</text>
<text class="t" x="841" y="635" textLength="71" lengthAdjust="spacingAndGlyphs">Website</text>
<rect class="inp" x="923" y="613" width="400" height="34"/><rect class="ul" x="923" y="645" width="400" height="2"/>
<rect class="btn" x="1335" y="615" width="148" height="31" rx="4"/>
<text class="t" x="1341.500" y="636" textLength="134" lengthAdjust="spacingAndGlyphs">Bezoek website</text>
<text class="t" x="737" y="679" textLength="175" lengthAdjust="spacingAndGlyphs">Key-accountmanager</text>
<use href="#s400" x="922" y="657"/>

<text class="t" x="790.500" y="820" textLength="122" lengthAdjust="spacingAndGlyphs">Moederbedrijf</text>
<text class="t" x="761.400" y="864" textLength="151" lengthAdjust="spacingAndGlyphs">Oprichtingsdatum</text>
<rect class="inp" x="923" y="842" width="95.600" height="34"/><rect class="ul" x="923" y="874.500" width="95.600" height="1.800"/>
<rect class="inp" x="1029" y="842" width="93" height="34"/><rect class="ul" x="1029" y="874.500" width="93" height="1.800"/>
<text class="t" x="936" y="864">-</text>
<text class="t" x="1132" y="869" textLength="108.500" lengthAdjust="spacingAndGlyphs">(dd-mm) (jjjj)</text>
<text class="t" x="786" y="908" textLength="126" lengthAdjust="spacingAndGlyphs">Eerste boeking</text>
<rect class="inp" x="923" y="886" width="95.600" height="34"/><rect class="ul" x="923" y="918.500" width="95.600" height="1.800"/>
<rect class="inp" x="1029" y="886" width="93" height="34"/><rect class="ul" x="1029" y="918.500" width="93" height="1.800"/>
<text class="t" x="927" y="908" textLength="44" lengthAdjust="spacingAndGlyphs">01-07</text>
<text class="t" x="1034" y="908" textLength="37" lengthAdjust="spacingAndGlyphs">2023</text>
<text class="t" x="1132" y="908" textLength="108.500" lengthAdjust="spacingAndGlyphs">(dd-mm) (jjjj)</text>
<text class="t" x="789" y="953" textLength="125" lengthAdjust="spacingAndGlyphs">Vestigingsland</text>
<use href="#s400" x="924" y="930"/>
<text class="t" x="817.500" y="996" textLength="96.500" lengthAdjust="spacingAndGlyphs">Rechtsvorm</text>
<use href="#s400" x="924" y="972"/><use href="#dots" x="1371" y="974"/>

<text class="t" x="763.500" y="1126" textLength="150.500" lengthAdjust="spacingAndGlyphs">Standaard locatie</text>
<use href="#s400" x="924" y="1103"/>
<text class="t" x="751" y="1168" textLength="163" lengthAdjust="spacingAndGlyphs">Standaard prijslijst</text>
<use href="#s400" x="924" y="1145"/>

<text class="t" x="770" y="1250" textLength="144" lengthAdjust="spacingAndGlyphs">Potentiële omzet</text>
<use href="#s400" x="924" y="1227"/><use href="#dots" x="1371" y="1229"/>
<text class="t" x="845.600" y="1292" textLength="68" lengthAdjust="spacingAndGlyphs">Branche</text>
<use href="#s400" x="924" y="1269"/><use href="#dots" x="1371" y="1271"/>
<text class="t" x="930" y="1292" textLength="70" lengthAdjust="spacingAndGlyphs">Catering</text>
<text class="t" x="737" y="1334" textLength="177" lengthAdjust="spacingAndGlyphs">Aantal medewerkers</text>
<use href="#s400" x="924" y="1311"/><use href="#dots" x="1371" y="1313"/>
<text class="t" x="930" y="1334" textLength="60" lengthAdjust="spacingAndGlyphs">1-5 FTE</text>
<text class="t" x="800.700" y="1377" textLength="113" lengthAdjust="spacingAndGlyphs">Relatiestatus</text>
<use href="#s400" x="924" y="1353"/><use href="#dots" x="1371" y="1355"/>
<text class="t" x="930" y="1377" textLength="315" lengthAdjust="spacingAndGlyphs">Entertainment / Leverancier / Locatie</text>
<text class="t" x="875.700" y="1419" textLength="38" lengthAdjust="spacingAndGlyphs">Bron</text>
<use href="#s400" x="924" y="1396"/><use href="#dots" x="1371" y="1398"/>
<text class="t" x="930" y="1419" textLength="71" lengthAdjust="spacingAndGlyphs">Website</text>
<text class="t" x="736" y="1462" textLength="178" lengthAdjust="spacingAndGlyphs">Broncode vrije invoer</text>
<rect class="inp" x="925" y="1438" width="400" height="33"/><rect class="ul" x="925" y="1469" width="400" height="2"/>

<rect x="925" y="1494" width="113" height="36" rx="4" fill="#f5f5f5" stroke="#e6e6e6" stroke-width="1.500"/>
<text class="t" x="968" y="1518" textLength="25" lengthAdjust="spacingAndGlyphs" style="fill:#999">OK</text>
<rect x="1046.600" y="1494" width="113" height="36" rx="4" fill="#f5f5f5" stroke="#e6e6e6" stroke-width="1.500"/>
<text class="t" x="1058" y="1518" textLength="90" lengthAdjust="spacingAndGlyphs" style="fill:#999">Annuleren</text>
</g>

<!-- annotations -->
<path d="M1714 408Q2140 409 2574 413.500V610Q2140 620 1710.500 611z" fill="#f2c335"/>
<path d="M1591 840Q2000 841 2378.600 845V939Q1990 949 1586 940z" fill="#f2c335"/>
<g class="arr">
<path d="M816 230C860 300 960 365 1099 417C1260 480 1500 515 1717 515"/>
<path d="M843 235L816 230L815 257"/>
<path d="M978 225C1040 310 1130 340 1252 390C1400 450 1580 490 1717 515"/>
<path d="M1005 226L978 225L978 251"/>
<path d="M1164 230C1195 290 1260 325 1329 367C1430 430 1590 475 1717 515"/>
<path d="M1189.500 235L1164 230L1160 257"/>
</g>
<circle cx="1715.500" cy="395" r="39" fill="#cc0000"/>
<circle cx="1585" cy="833" r="39" fill="#cc0000"/>
<text x="1712" y="405" font-size="26" fill="#fff" text-anchor="middle">2</text>
<text x="1579" y="842" font-size="26" fill="#fff" text-anchor="middle">1</text>
<text class="n" x="1735" y="452" textLength="810" lengthAdjust="spacingAndGlyphs">Hier is heel veel informatie te vullen, maar er is maar weinig verplicht.</text>
<text class="n" x="1731.600" y="484" textLength="818" lengthAdjust="spacingAndGlyphs">Het is dus mogelijk om je CRM heel uitgebreid of juist heel beknopt te</text>
<text class="n" x="2094" y="515" textLength="92" lengthAdjust="spacingAndGlyphs">houden.</text>
<text class="n" x="1761" y="577.500" textLength="760" lengthAdjust="spacingAndGlyphs">De belangrijkste onderdelen om te vullen zijn de eigenschappen,</text>
<text class="n" x="1964.600" y="608" textLength="358" lengthAdjust="spacingAndGlyphs">adressen en contactpersonen.</text>
<text class="n" x="1616" y="884" textLength="730" lengthAdjust="spacingAndGlyphs">In het CRM kun je al je relaties (particulier en zakelijk) en al je</text>
<text class="n" x="1845" y="915.500" textLength="278" lengthAdjust="spacingAndGlyphs">leveranciers verwerken.</text>
</svg>
</body></html>
